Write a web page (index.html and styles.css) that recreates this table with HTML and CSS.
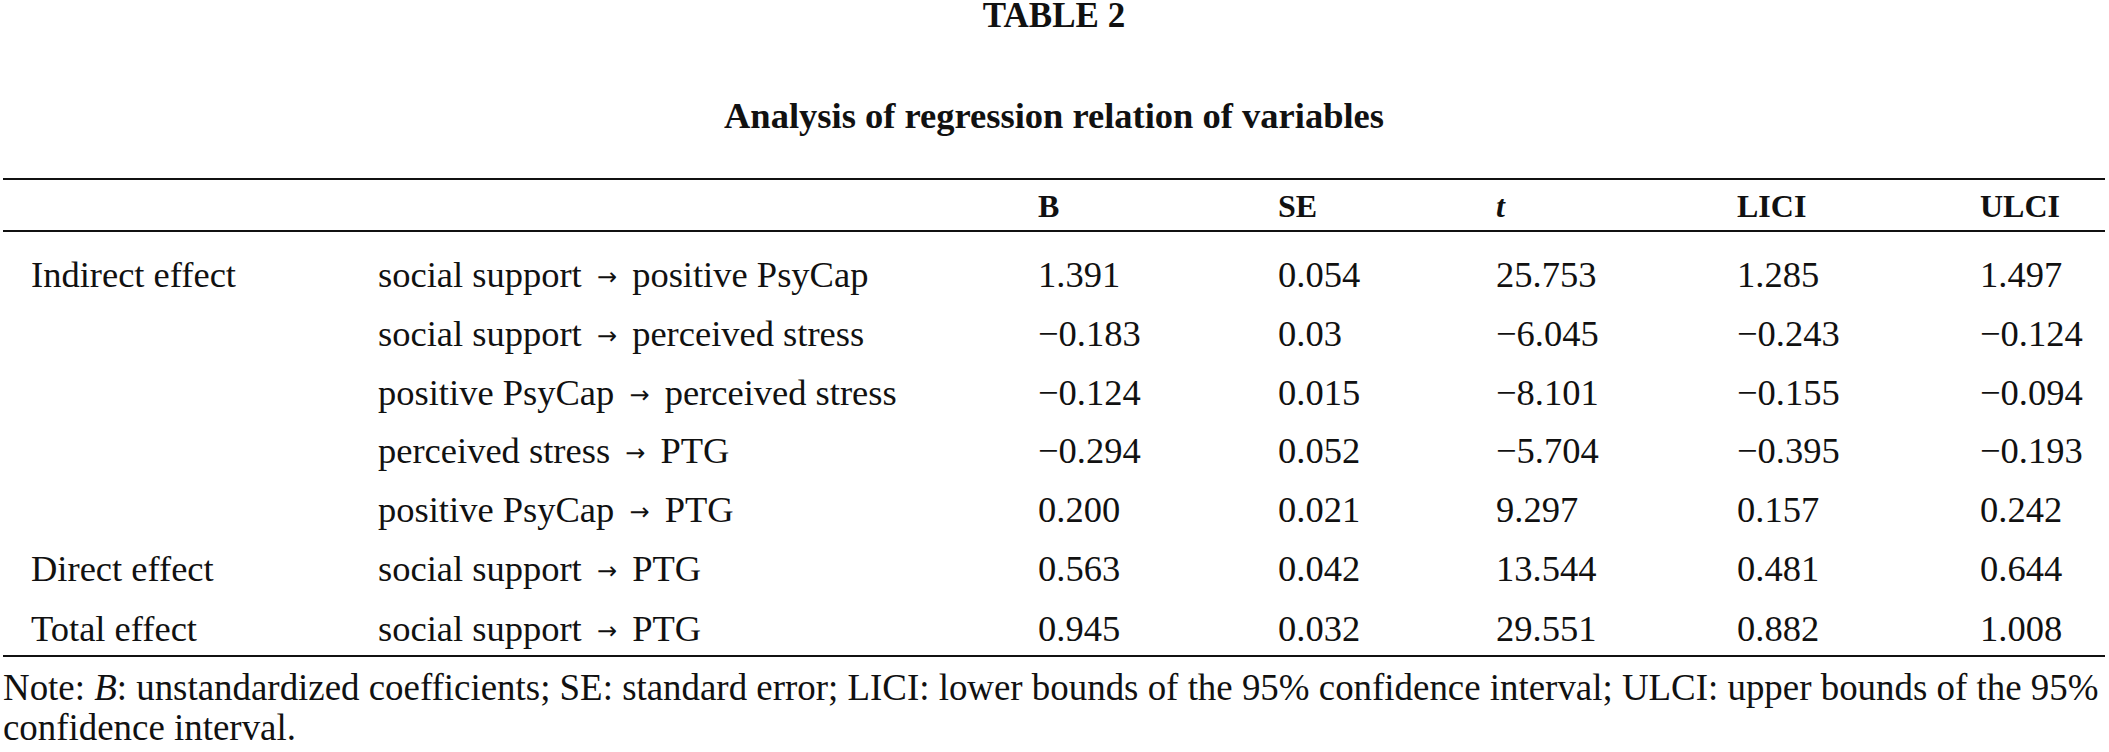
FILE: index.html
```html
<!DOCTYPE html>
<html lang="en">
<head>
<meta charset="utf-8">
<title>Table 2</title>
<link rel="stylesheet" href="styles.css">
</head>
<body>
<div class="page">
  <h1 class="label">TABLE 2</h1>
  <h2 class="caption">Analysis of regression relation of variables</h2>
  <table class="data">
    <colgroup>
      <col class="c-effect">
      <col class="c-path">
      <col class="c-b">
      <col class="c-se">
      <col class="c-t">
      <col class="c-lici">
      <col class="c-ulci">
    </colgroup>
    <thead>
      <tr>
        <th></th>
        <th></th>
        <th>B</th>
        <th>SE</th>
        <th><i>t</i></th>
        <th>LICI</th>
        <th>ULCI</th>
      </tr>
    </thead>
    <tbody>
      <tr>
        <td>Indirect effect</td>
        <td>social support <span class="arr">→</span> positive PsyCap</td>
        <td>1.391</td><td>0.054</td><td>25.753</td><td>1.285</td><td>1.497</td>
      </tr>
      <tr>
        <td></td>
        <td>social support <span class="arr">→</span> perceived stress</td>
        <td>−0.183</td><td>0.03</td><td>−6.045</td><td>−0.243</td><td>−0.124</td>
      </tr>
      <tr>
        <td></td>
        <td>positive PsyCap <span class="arr">→</span> perceived stress</td>
        <td>−0.124</td><td>0.015</td><td>−8.101</td><td>−0.155</td><td>−0.094</td>
      </tr>
      <tr>
        <td></td>
        <td>perceived stress <span class="arr">→</span> PTG</td>
        <td>−0.294</td><td>0.052</td><td>−5.704</td><td>−0.395</td><td>−0.193</td>
      </tr>
      <tr>
        <td></td>
        <td>positive PsyCap <span class="arr">→</span> PTG</td>
        <td>0.200</td><td>0.021</td><td>9.297</td><td>0.157</td><td>0.242</td>
      </tr>
      <tr>
        <td>Direct effect</td>
        <td>social support <span class="arr">→</span> PTG</td>
        <td>0.563</td><td>0.042</td><td>13.544</td><td>0.481</td><td>0.644</td>
      </tr>
      <tr>
        <td>Total effect</td>
        <td>social support <span class="arr">→</span> PTG</td>
        <td>0.945</td><td>0.032</td><td>29.551</td><td>0.882</td><td>1.008</td>
      </tr>
    </tbody>
  </table>
  <p class="note">Note: <i>B</i>: unstandardized coefficients; SE: standard error; LICI: lower bounds of the 95% confidence interval; ULCI: upper bounds of the 95% confidence interval.</p>
</div>
</body>
</html>
```
FILE: styles.css
```css
html, body {
  margin: 0;
  padding: 0;
  background: #ffffff;
}

body {
  font-family: "Liberation Serif", "Times New Roman", serif;
  color: #111111;
}

.page {
  padding: 0 4px 0 3px;
}

.label {
  margin: 0;
  font-size: 35px;
  line-height: 32px;
  font-weight: bold;
  text-align: center;
}

.caption {
  margin: 64px 0 0;
  font-size: 36.5px;
  line-height: 40px;
  font-weight: bold;
  text-align: center;
}

.data {
  margin-top: 42px;
  width: 100%;
  border-collapse: collapse;
  table-layout: fixed;
}

.c-effect { width: 375px; }
.c-path { width: 660px; }
.c-b { width: 240px; }
.c-se { width: 218px; }
.c-t { width: 241px; }
.c-lici { width: 243px; }
.c-ulci { width: auto; }

.data thead tr {
  border-top: 2px solid #111111;
  border-bottom: 2px solid #111111;
}

.data th {
  font-size: 32px;
  font-weight: bold;
  text-align: left;
  line-height: 48px;
  padding: 2px 0 0;
}

.data td {
  font-size: 36.5px;
  line-height: 58.8px;
  padding: 0;
  white-space: nowrap;
  vertical-align: top;
}

.data td:first-child {
  padding-left: 28px;
}

.arr {
  display: inline-block;
  margin: 0 6px;
  font-family: "DejaVu Sans", sans-serif;
  font-size: 24px;
  line-height: 1;
  vertical-align: 2px;
}

.data tbody tr:first-child td {
  padding-top: 14px;
}

.data tbody tr:last-child {
  border-bottom: 2px solid #111111;
}

.data tbody tr:last-child td {
  line-height: 52px;
  padding-top: 4px;
}

.note {
  margin: 11px 0 0;
  font-size: 36.9px;
  line-height: 40px;
}
```
